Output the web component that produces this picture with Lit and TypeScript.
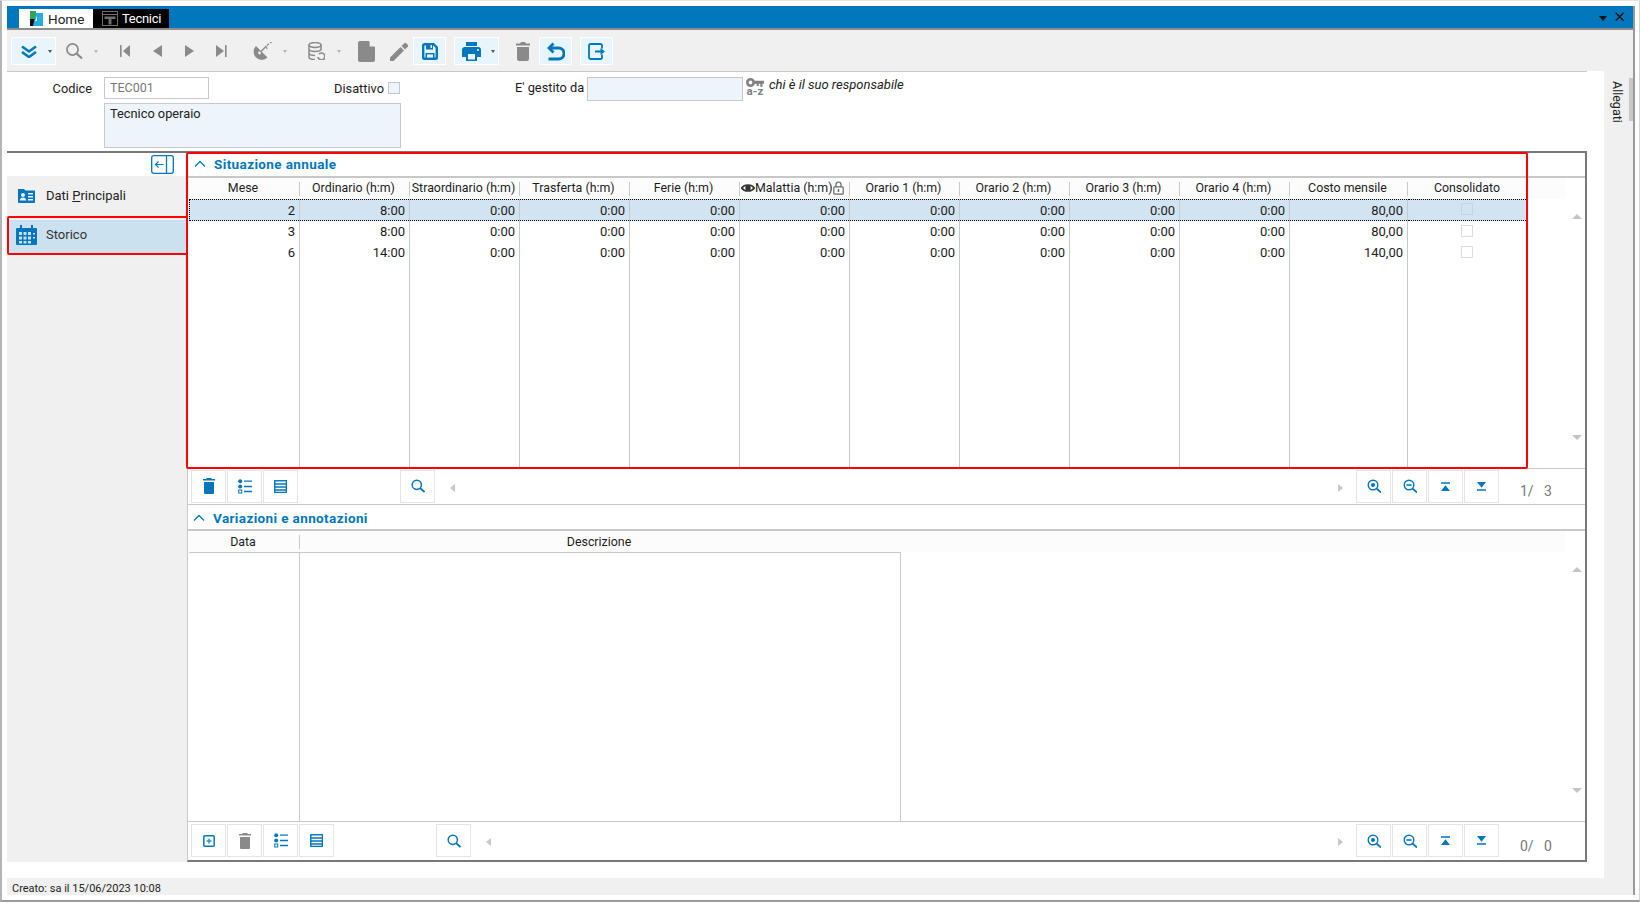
import { LitElement, html, css, svg } from "lit";
import { customElement } from "lit/decorators.js";

const ICONS: Record<string, any> = {
  chev: svg`<path d="M2 2l7 5 7-5M2 7.5l7 5 7-5" fill="none" stroke="currentColor" stroke-width="2.6" transform="translate(0 .5)"/>`,
  search: svg`<circle cx="7.5" cy="7.5" r="5.6" fill="none" stroke="currentColor" stroke-width="1.7"/><path d="M11.5 11.5l5.5 5" stroke="currentColor" stroke-width="2.2" fill="none"/>`,
  first: svg`<path d="M1 1h1.6v12H1zM11 1v12L4 7z" fill="currentColor"/>`,
  prev: svg`<path d="M10 1v12L1 7z" fill="currentColor"/>`,
  next: svg`<path d="M1 1v12l9-6z" fill="currentColor"/>`,
  last: svg`<path d="M10 1h1.6v12H10zM1 1v12l8-6z" fill="currentColor"/>`,
  sat: svg`<path d="M3 4A8 8 0 0 0 14.500 15.500z" fill="currentColor"/><circle cx="6.500" cy="11" r="1.400" fill="#f0f0f0"/><path d="M8 9.500l4.500-4.500" stroke="currentColor" stroke-width="1.500"/><path d="M14 3.500l1.800-1.800M17 1l1.500-1" stroke="currentColor" stroke-width="1.300"/><path d="M12 4a3 3 0 0 1 2 3" fill="none" stroke="currentColor" stroke-width="1.200"/>`,
  db: svg`<ellipse cx="7" cy="3" rx="6" ry="2.400" fill="none" stroke="currentColor" stroke-width="1.500"/><path d="M1 3v12c0 1.500 3 2.500 6 2.500M13 3v5M1 7c0 1.500 3 2.400 6 2.400s6-.9 6-2.400M1 11c0 1.500 3 2.400 6 2.400" fill="none" stroke="currentColor" stroke-width="1.500"/><path d="M10 15a3.500 3.500 0 1 0 1-3" fill="none" stroke="currentColor" stroke-width="1.700"/>`,
  doc: svg`<path d="M2 0h9l6 6v13a2 2 0 0 1-2 2H2a2 2 0 0 1-2-2V2a2 2 0 0 1 2-2z" fill="currentColor"/><path d="M11 0v6h6z" fill="#f0f0f0" transform="translate(.6 -.6)"/>`,
  pencil: svg`<path d="M0 15.500V19h3.500L14 8.500 10.500 5zM15 7.500l3-3a1 1 0 0 0 0-1.400L15.900 1a1 1 0 0 0-1.400 0l-3 3z" fill="currentColor"/>`,
  save: svg`<path d="M1.200 2.500A1.300 1.300 0 0 1 2.500 1.200h9l3.300 3.300v10a1.300 1.300 0 0 1-1.300 1.300h-11a1.300 1.300 0 0 1-1.300-1.300z" fill="none" stroke="currentColor" stroke-width="2.400"/><path d="M4 1h7v5.500H4zM3.500 10h9v6h-9z" fill="currentColor"/><path d="M5 11.400h6v3.200H5z" fill="#e9f5fd"/><path d="M8.500 2h1.500v3H8.500z" fill="#e9f5fd"/>`,
  print: svg`<path d="M4 0h11v4H4zM3 5h13a3 3 0 0 1 3 3v7h-4v4H4v-4H0V8a3 3 0 0 1 3-3z" fill="currentColor"/><path d="M6 12h7v5.500H6z" fill="#e9f5fd"/><circle cx="16" cy="8" r="1" fill="#e9f5fd"/>`,
  trash: svg`<path d="M5 0h4l1 1.500h4v2H0v-2h4zM1 5h12v12a2 2 0 0 1-2 2H3a2 2 0 0 1-2-2z" fill="currentColor"/>`,
  undo: svg`<path d="M6.500 1.500L2 6l4.500 4.500" fill="none" stroke="currentColor" stroke-width="2.800"/><path d="M2.500 6h9a5.500 5.500 0 0 1 0 11H1.500" fill="none" stroke="currentColor" stroke-width="3"/>`,
  exit: svg`<path d="M14 5.500V2.500A1.500 1.500 0 0 0 12.500 1h-10A1.500 1.500 0 0 0 1 2.500v12A1.500 1.500 0 0 0 2.500 16h10a1.500 1.500 0 0 0 1.500-1.500V11.500" fill="none" stroke="currentColor" stroke-width="1.800"/><path d="M7 7.400h5.500V5l4.500 3.500-4.500 3.500V9.600H7z" fill="currentColor"/>`,
  card: svg`<path d="M0 1h6l1.500 1.500H17V14a1 1 0 0 1-1 1H1a1 1 0 0 1-1-1z" fill="currentColor"/><circle cx="5" cy="7" r="2" fill="#f0f0f0"/><path d="M1.800 12.500c0-2 1.500-3 3.200-3s3.200 1 3.200 3zM10 5h5v1.400h-5zM10 8h5v1.400h-5zM10 11h5v1.400h-5z" fill="#f0f0f0"/>`,
  cal: svg`<path d="M1 4h19a1 1 0 0 1 1 1v15a1 1 0 0 1-1 1H1a1 1 0 0 1-1-1V5a1 1 0 0 1 1-1z" fill="currentColor"/><path d="M4 1h2v5H4zM15 1h2v5h-2z" fill="currentColor"/><path d="M3 8h3v3H3zM7.500 8h3v3h-3zM12 8h3v3h-3zM3 12.500h3v3H3zM7.500 12.500h3v3h-3zM12 12.500h3v3h-3zM3 17h3v2.500H3zM7.500 17h3v2.500h-3zM12 17h3v2.500h-3zM17 9h2v1.500h-2zM17 13h2v1.500h-2z" fill="#cbe1f0"/>`,
  collapse: svg`<rect x=".7" y=".7" width="21.600" height="17.600" rx="2" fill="none" stroke="currentColor" stroke-width="1.300"/><path d="M15.500 1v17" stroke="currentColor" stroke-width="1.300"/><path d="M12.500 9.500H4.500M7.500 6.500l-3 3 3 3" fill="none" stroke="currentColor" stroke-width="1.200"/>`,
  up: svg`<path d="M1 7.500L6 2.500l5 5" fill="none" stroke="currentColor" stroke-width="1.300"/>`,
  gtrash: svg`<path d="M4 0h4l1 1h3v1.500H0V1h3zM1 4h10v11a1 1 0 0 1-1 1H2a1 1 0 0 1-1-1z" fill="currentColor"/>`,
  list: svg`<circle cx="2.200" cy="2.200" r="2" fill="currentColor"/><circle cx="2.200" cy="7.500" r="2" fill="currentColor"/><rect x=".7" y="11" width="3" height="3" fill="none" stroke="currentColor"/><path d="M6 2.200h8M6 7.500h8M6 12.500h8" stroke="currentColor" stroke-width="1.300"/>`,
  rows: svg`<rect x=".7" y=".7" width="10.600" height="10.600" fill="none" stroke="currentColor" stroke-width="1.300" transform="scale(1.100)"/><path d="M1 4h11.500M1 7h11.500M1 10h11.500" stroke="currentColor" stroke-width="1.300"/>`,
  add: svg`<rect x=".8" y=".8" width="10.400" height="10.400" rx="1" fill="none" stroke="currentColor" stroke-width="1.500"/><path d="M3.500 6h5M6 3.500v5" stroke="currentColor" stroke-width="1.500" opacity=".8"/>`,
  zoomin: svg`<circle cx="6" cy="6" r="4.800" fill="none" stroke="currentColor" stroke-width="1.400"/><circle cx="6" cy="6" r="2" fill="currentColor"/><path d="M9.500 9.500l4.500 4" stroke="currentColor" stroke-width="1.700"/>`,
  zoomout: svg`<circle cx="6" cy="6" r="4.800" fill="none" stroke="currentColor" stroke-width="1.400"/><path d="M3.500 6h5" stroke="currentColor" stroke-width="1.600"/><path d="M9.500 9.500l4.500 4" stroke="currentColor" stroke-width="1.700"/>`,
  gsearch: svg`<circle cx="5.800" cy="5.800" r="4.600" fill="none" stroke="currentColor" stroke-width="1.500"/><path d="M9 9l4.500 4" stroke="currentColor" stroke-width="1.800"/>`,
  top: svg`<path d="M0 .3h9v1.500H0zM4.500 3.200L9 9H0z" fill="currentColor"/>`,
  bottom: svg`<path d="M0 0h9L4.500 5.800zM0 7.200h9v1.500H0z" fill="currentColor"/>`,
  eye: svg`<path d="M.7 5C3.300 1 10.700 1 13.300 5 10.700 9 3.300 9 .7 5z" fill="none" stroke="currentColor" stroke-width="1.700"/><circle cx="7" cy="5" r="2.700" fill="currentColor"/>`,
  lock: svg`<path d="M3 6V3.500a2.500 2.500 0 0 1 5 0V6" fill="none" stroke="currentColor" stroke-width="1.200"/><rect x=".8" y="5.800" width="9.400" height="7.400" rx="1" fill="none" stroke="currentColor" stroke-width="1.200"/><rect x="4.800" y="8" width="1.400" height="3" fill="currentColor"/>`,
  key: svg`<circle cx="4.500" cy="4.500" r="3.200" fill="none" stroke="currentColor" stroke-width="2.600"/><path d="M7.500 2.800h10.500v3H16.500v3h-2.200v-3h-1.500v2.200h-2.200V5.800H7.500z" fill="currentColor"/>`,
  x: svg`<path d="M.7.700l8 8M8.700.700l-8 8" stroke="currentColor" stroke-width="1.300" fill="none"/>`,
  home: svg`<path d="M0 0h6v8H0z" fill="#2fa84f"/><path d="M0 8h6v7H0z" fill="#111"/><path d="M6 2l7 0v13H3z" fill="#29abe2"/><path d="M7 5v5H5z" fill="#fff"/>`,
  tec: svg`<rect x=".5" y=".5" width="15" height="14" fill="none" stroke="#6e6e6e"/><path d="M.5 3.500h15" stroke="#6e6e6e"/><path d="M2.500 5.500h11v2.500H9.500v5.500h-3V8H2.500z" fill="#6e6e6e"/>`,
};

const ic = (name: string, w: number, h: number, cls = "") =>
  html`<svg class="ic ${cls}" width=${w} height=${h} viewBox="0 0 ${w} ${h}">${ICONS[name]}</svg>`;

interface Col { label: string; cls: string; kind?: string }
const COLS: Col[] = [
  { label: "Mese", cls: "w1" },
  { label: "Ordinario (h:m)", cls: "w" },
  { label: "Straordinario (h:m)", cls: "w" },
  { label: "Trasferta (h:m)", cls: "w" },
  { label: "Ferie (h:m)", cls: "w" },
  { label: "Malattia (h:m)", cls: "w", kind: "mal" },
  { label: "Orario 1 (h:m)", cls: "w" },
  { label: "Orario 2 (h:m)", cls: "w" },
  { label: "Orario 3 (h:m)", cls: "w" },
  { label: "Orario 4 (h:m)", cls: "w" },
  { label: "Costo mensile", cls: "wc" },
  { label: "Consolidato", cls: "wl", kind: "check" },
];
const ROWS = [
  ["2", "8:00", "0:00", "0:00", "0:00", "0:00", "0:00", "0:00", "0:00", "0:00", "80,00", ""],
  ["3", "8:00", "0:00", "0:00", "0:00", "0:00", "0:00", "0:00", "0:00", "0:00", "80,00", ""],
  ["6", "14:00", "0:00", "0:00", "0:00", "0:00", "0:00", "0:00", "0:00", "0:00", "140,00", ""],
];

@customElement("app-root")
export class AppRoot extends LitElement {
  static styles = css`
    :host { display: block; width: 1641px; height: 903px; background: #fff; overflow: hidden; font-family: Roboto, "Liberation Sans", sans-serif; font-size: 13px; color: #1c1c1c; }
    * { box-sizing: border-box; }
    .ic { display: block; flex: none; }
    .frame { width: 1640px; height: 902px; border-left: 2px solid #b4b4b4; border-top: 1px solid #e6e6e6; border-right: 1px solid #d4d4d4; border-bottom: 2px solid #9c9c9c; padding: 5px 0 0 5px; }
    .win { width: 1628px; height: 889px; border-right: 2px solid #9a9a9a; display: flex; flex-direction: column; }

    .title { height: 24px; flex: none; background: #0277bd; border-bottom: 2px solid #8c8c8c; display: flex; align-items: flex-end; padding-left: 12px; }
    .tab { height: 19px; display: flex; align-items: center; }
    .tab.home { width: 74px; background: #fff; color: #222; padding-left: 11px; gap: 5px; font-size: 13.500px; }
    .tab.tec { width: 76px; background: #000; color: #fff; padding-left: 9px; gap: 4px; font-size: 13px; letter-spacing: -.3px; }
    .winctl { margin-left: auto; display: flex; align-items: center; height: 22px; align-self: flex-start; padding-right: 8px; gap: 8px; color: #111; }
    .tri { width: 0; height: 0; border-left: 4px solid transparent; border-right: 4px solid transparent; border-top: 5px solid #111; margin-top: 3px; }

    .bar { height: 41px; flex: none; background: #f0f0f0; display: flex; align-items: flex-start; padding: 7px 0 0 4px; color: #8a8a8a; }
    .bar > * { height: 28px; display: flex; align-items: center; flex: none; }
    .blue { background: #e9f5fd; border: 1px solid #fff; color: #0277bd; justify-content: center; }
    .caret { width: 0; height: 0; border-left: 2.500px solid transparent; border-right: 2.500px solid transparent; border-top: 3px solid #b4b4b4; flex: none; }
    .caret.dark { border-top-color: #555; }
    .b1 { width: 45px; justify-content: flex-start; padding-left: 8px; gap: 10px; }
    .b2 { margin-left: 9px; gap: 11px; width: 39px; }
    .nav { width: 32px; justify-content: center; }
    .nf { margin-left: 5px; }
    .b3 { margin-left: 16px; gap: 10px; width: 35px; }
    .b4 { margin-left: 20px; gap: 12px; width: 34px; }
    .b5 { margin-left: 16px; width: 17px; }
    .b6 { margin-left: 15px; width: 18px; }
    .b7 { margin-left: 5px; width: 33px; }
    .b8 { margin-left: 8px; width: 45px; justify-content: flex-start; padding-left: 7px; gap: 10px; }
    .b9 { margin-left: 17px; width: 14px; }
    .b10 { margin-left: 9px; width: 33px; }
    .b11 { margin-left: 8px; width: 33px; }

    .main { flex: 1; display: flex; min-height: 0; }
    .left { width: 1597px; flex: none; display: flex; flex-direction: column; }
    .allegati { flex: 1; background: #f0f0f0; display: flex; justify-content: space-between; padding-top: 7px; }
    .alltxt { writing-mode: vertical-rl; font-size: 12.500px; margin: 3px 0 0 6px; height: 44px; color: #222; }
    .thumb { width: 4px; height: 43px; background: #c8c8c8; }

    .upper { width: 1580px; flex: none; }
    .form { height: 82px; border-top: 1px solid #c8c8c8; border-bottom: 2px solid #787878; display: flex; align-items: flex-start; padding-top: 5px; font-size: 12.800px; }
    .fleft { width: 394px; flex: none; }
    .frow { display: flex; align-items: center; height: 22px; }
    .lab { width: 85px; text-align: right; margin-right: 12px; flex: none; }
    .inp { border: 1px solid #c8c8c8; background: #fff; height: 22px; width: 105px; color: #777; padding-left: 5px; font-size: 12.500px; display: flex; align-items: center; flex: none; padding-bottom: 2px; }
    .dis { margin-left: auto; margin-right: 4px; }
    .ck { width: 12px; height: 12px; border: 1px solid #c4c8cc; background: #eef4fb; flex: none; }
    .frow .ck { margin-right: 1px; }
    .txta { margin: 4px 0 0 97px; width: 297px; height: 45px; border: 1px solid #c8c8c8; background: #eef4fb; padding: 2px 5px; color: #222; }
    .gest { margin-left: 114px; display: flex; align-items: flex-start; height: 25px; }
    .gest .t { line-height: 22px; width: 72px; }
    .gin { width: 156px; height: 24px; border: 1px solid #c8c8c8; background: #eef4fb; flex: none; }
    .keyb { width: 18px; margin-left: 3px; color: #808080; display: flex; flex-direction: column; align-items: center; padding-top: 1px; }
    .keyb span { font-size: 11.500px; font-weight: 700; line-height: 9px; letter-spacing: .2px; }
    .hint { font-style: italic; margin-left: 5px; font-size: 13px; line-height: 15px; color: #222; }

    .bodyrow { flex: 1; display: flex; width: 1580px; position: relative; min-height: 0; }
    .side { width: 180px; flex: none; display: flex; flex-direction: column; }
    .sidetop { height: 23px; flex: none; display: flex; justify-content: flex-end; padding: 2px 13px 0 0; color: #0277bd; }
    .sidelist { flex: 1; background: #f0f0f0; display: flex; flex-direction: column; }
    .sitem { display: flex; align-items: center; color: #2a2a2a; flex: none; }
    .sitem.a { height: 41px; padding: 0 0 2px 11px; gap: 11px; color: #222; }
    .sitem.a svg { color: #0277bd; }
    .sitem.b { height: 33px; margin-top: 3px; background: #cbe1f0; padding: 0 0 4px 9px; gap: 9px; color: #333; }
    .sitem.b svg { color: #0277bd; }
    u { text-decoration: underline; }

    .panel { flex: 1; border-left: 1px solid #c8c8c8; border-right: 2px solid #787878; border-bottom: 2px solid #787878; display: flex; flex-direction: column; min-width: 0; }
    .sec { flex: none; border-bottom: 2px solid #c8c8c8; display: flex; align-items: center; padding-left: 6px; gap: 8px; color: #0277bd; font-weight: 700; font-size: 13.500px; letter-spacing: .38px; }
    .sec.s1 { height: 25px; padding-bottom: 2px; }
    .sec.s2 { height: 26px; padding-left: 5px; padding-top: 1px; }
    .grid { height: 291px; flex: none; border-bottom: 1px solid #c8c8c8; display: flex; padding-left: 1px; }
    .col { display: flex; flex-direction: column; flex: none; border-right: 1px solid #c8c8c8; }
    .w1 { width: 111px; } .w { width: 110px; } .wc { width: 118px; } .wl { width: 120px; border-right: none; }
    .wd1 { width: 111px; } .wd2 { width: 601px; }
    .hd { height: 21px; flex: none; background: #fcfcfc; display: flex; align-items: center; justify-content: center; white-space: nowrap; margin-right: -1px; position: relative; z-index: 1; font-size: 12.400px; padding: 0 3px 2px 0; }
    .hd i { position: absolute; right: 0; top: 4px; height: 14px; width: 1px; background: #c8c8c8; }
    .hd.mal { justify-content: flex-start; padding: 0 0 2px 1px; }
    .hd.mal .ic { color: #333; }
    .hd.mal .ic.lk { color: #666; }
    .hd.line { height: 22px; border-bottom: 1px solid #c8c8c8; margin-bottom: 1px; padding-bottom: 0; }
    .cell { height: 21px; flex: none; display: flex; align-items: center; justify-content: flex-end; padding-right: 4px; font-size: 13px; }
    .cell.sel { height: 22px; background: #d2e4f1; border-top: 1px dotted #000; border-bottom: 1px dotted #000; }
    .cell.first { border-left: 1px dotted #000; }
    .cell.last { border-right: 1px dotted #000; }
    .cell.ctr { justify-content: center; padding-right: 2px; }
    .cb { width: 12px; height: 12px; border: 1px solid #dcdcdc; margin-top: -2px; }
    .sel .cb { border-color: #c6d4de; }
    .scroller { flex: 1; display: flex; flex-direction: column; min-width: 0; }
    .hfill { height: 21px; flex: none; background: #fcfcfc; margin-right: 19px; }
    .arrows { flex: 1; display: flex; flex-direction: column; justify-content: space-between; align-items: flex-end; padding: 15px 3px 28px 0; }
    .ar-u { width: 0; height: 0; border-left: 5px solid transparent; border-right: 5px solid transparent; border-bottom: 5px solid #c4c4c4; }
    .ar-d { width: 0; height: 0; border-left: 5px solid transparent; border-right: 5px solid transparent; border-top: 5px solid #c4c4c4; }

    .gtb { flex: none; display: flex; align-items: flex-start; padding: 1px 0 0 3px; gap: 1px; color: #0277bd; }
    .gtb.t1 { border-bottom: 1px solid #c8c8c8; height: 36px; }
    .gtb.t2 { height: 36px; padding-top: 2px; }
    .gb { width: 35px; height: 33px; border: 1px solid #e4e4e4; background: #fff; display: flex; align-items: center; justify-content: center; flex: none; padding-bottom: 1px; }
    .t2 .gb { padding-bottom: 0; }
    .gb.gr { color: #8a8a8a; }
    .ml { margin-left: 101px; }
    .al { width: 0; height: 0; border-top: 4.500px solid transparent; border-bottom: 4.500px solid transparent; border-right: 5px solid #c8c8c8; margin: 14px 0 0 14px; flex: none; }
    .ar { width: 0; height: 0; border-top: 4.500px solid transparent; border-bottom: 4.500px solid transparent; border-left: 5px solid #c8c8c8; margin: 14px 12px 0 auto; flex: none; }
    .count { width: 85px; flex: none; padding: 14px 0 0 20px; white-space: pre; font-size: 14px; color: #787878; line-height: 16px; }
    .t1 .count { padding-top: 13px; }

    .gap { height: 16px; flex: none; }
    .status { height: 17px; flex: none; background: #f0f0f0; padding-left: 5px; font-size: 11px; line-height: 22px; overflow: hidden; color: #222; }

    .red { position: absolute; border: 2px solid #f00; border-radius: 2px; pointer-events: none; z-index: 3; }
    .r1 { left: 179px; top: -1px; width: 1342px; height: 317px; }
    .r2 { left: 0; top: 63px; width: 181px; height: 39px; }
  `;

  private table(cols: Col[], rows: string[][]) {
    return cols.map((c, ci) => html`
      <div class="col ${c.cls}">
        <div class="hd ${c.kind === "mal" ? "mal" : ""}">
          ${c.kind === "mal" ? ic("eye", 14, 10) : ""}${c.label}${c.kind === "mal" ? ic("lock", 11, 14, "lk") : ""}
          ${ci < cols.length - 1 ? html`<i></i>` : ""}
        </div>
        ${rows.map((r, ri) => html`
          <div class="cell ${ri === 0 ? "sel" : ""} ${ri === 0 && ci === 0 ? "first" : ""} ${ri === 0 && ci === cols.length - 1 ? "last" : ""} ${c.kind === "check" ? "ctr" : ""}">
            ${c.kind === "check" ? html`<span class="cb"></span>` : r[ci]}
          </div>`)}
      </div>`);
  }

  private rightTools(count: string) {
    return html`
      <span class="ar"></span>
      <span class="gb">${ic("zoomin", 14, 14)}</span>
      <span class="gb">${ic("zoomout", 14, 14)}</span>
      <span class="gb">${ic("top", 9, 9)}</span>
      <span class="gb">${ic("bottom", 9, 9)}</span>
      <span class="count">${count}</span>`;
  }

  render() {
    return html`
    <div class="frame"><div class="win">
      <div class="title">
        <div class="tab home">${ic("home", 13, 15)}Home</div>
        <div class="tab tec">${ic("tec", 16, 15)}Tecnici</div>
        <div class="winctl"><span class="tri"></span>${ic("x", 10, 10)}</div>
      </div>
      <div class="bar">
        <div class="blue b1">${ic("chev", 18, 14)}<span class="caret dark"></span></div>
        <div class="b2">${ic("search", 18, 18)}<span class="caret"></span></div>
        <div class="nav nf">${ic("first", 12, 14)}</div>
        <div class="nav">${ic("prev", 11, 14)}</div>
        <div class="nav">${ic("next", 11, 14)}</div>
        <div class="nav">${ic("last", 12, 14)}</div>
        <div class="b3">${ic("sat", 20, 18)}<span class="caret"></span></div>
        <div class="b4">${ic("db", 17, 18)}<span class="caret"></span></div>
        <div class="b5">${ic("doc", 17, 21)}</div>
        <div class="b6">${ic("pencil", 18, 19)}</div>
        <div class="blue b7">${ic("save", 16, 17)}</div>
        <div class="blue b8">${ic("print", 19, 19)}<span class="caret dark"></span></div>
        <div class="b9">${ic("trash", 14, 19)}</div>
        <div class="blue b10">${ic("undo", 18, 19)}</div>
        <div class="blue b11">${ic("exit", 17, 17)}</div>
      </div>
      <div class="main">
        <div class="left">
          <div class="upper form">
            <div class="fleft">
              <div class="frow">
                <span class="lab">Codice</span><span class="inp">TEC001</span>
                <span class="dis">Disattivo</span><span class="ck"></span>
              </div>
              <div class="txta">Tecnico operaio</div>
            </div>
            <div class="gest">
              <span class="t">E' gestito da</span>
              <span class="gin"></span>
              <span class="keyb">${ic("key", 18, 9)}<span>a-z</span></span>
              <span class="hint">chi è il suo responsabile</span>
            </div>
          </div>
          <div class="bodyrow">
            <div class="side">
              <div class="sidetop">${ic("collapse", 23, 19)}</div>
              <div class="sidelist">
                <div class="sitem a">${ic("card", 17, 16)}<span>Dati <u>P</u>rincipali</span></div>
                <div class="sitem b">${ic("cal", 21, 22)}<span>Storico</span></div>
              </div>
            </div>
            <div class="panel">
              <div class="sec s1">${ic("up", 12, 10)}<span>Situazione annuale</span></div>
              <div class="grid">
                ${this.table(COLS, ROWS)}
                <div class="scroller"><div class="hfill"></div><div class="arrows"><span class="ar-u"></span><span class="ar-d"></span></div></div>
              </div>
              <div class="gtb t1">
                <span class="gb">${ic("gtrash", 12, 16)}</span>
                <span class="gb">${ic("list", 14, 15)}</span>
                <span class="gb">${ic("rows", 13, 13)}</span>
                <span class="gb ml">${ic("gsearch", 14, 14)}</span>
                <span class="al"></span>
                ${this.rightTools("1/   3")}
              </div>
              <div class="sec s2">${ic("up", 12, 10)}<span>Variazioni e annotazioni</span></div>
              <div class="grid">
                <div class="col wd1"><div class="hd line">Data<i></i></div></div>
                <div class="col wd2"><div class="hd line">Descrizione</div></div>
                <div class="scroller"><div class="hfill"></div><div class="arrows"><span class="ar-u"></span><span class="ar-d"></span></div></div>
              </div>
              <div class="gtb t2">
                <span class="gb">${ic("add", 12, 12)}</span>
                <span class="gb gr">${ic("gtrash", 12, 16)}</span>
                <span class="gb">${ic("list", 14, 15)}</span>
                <span class="gb">${ic("rows", 13, 13)}</span>
                <span class="gb ml">${ic("gsearch", 14, 14)}</span>
                <span class="al"></span>
                ${this.rightTools("0/   0")}
              </div>
            </div>
            <div class="red r1"></div>
            <div class="red r2"></div>
          </div>
          <div class="gap"></div>
          <div class="status">Creato: sa il 15/06/2023 10:08</div>
        </div>
        <div class="allegati">
          <span class="alltxt">Allegati</span>
          <span class="thumb"></span>
        </div>
      </div>
    </div></div>`;
  }
}
